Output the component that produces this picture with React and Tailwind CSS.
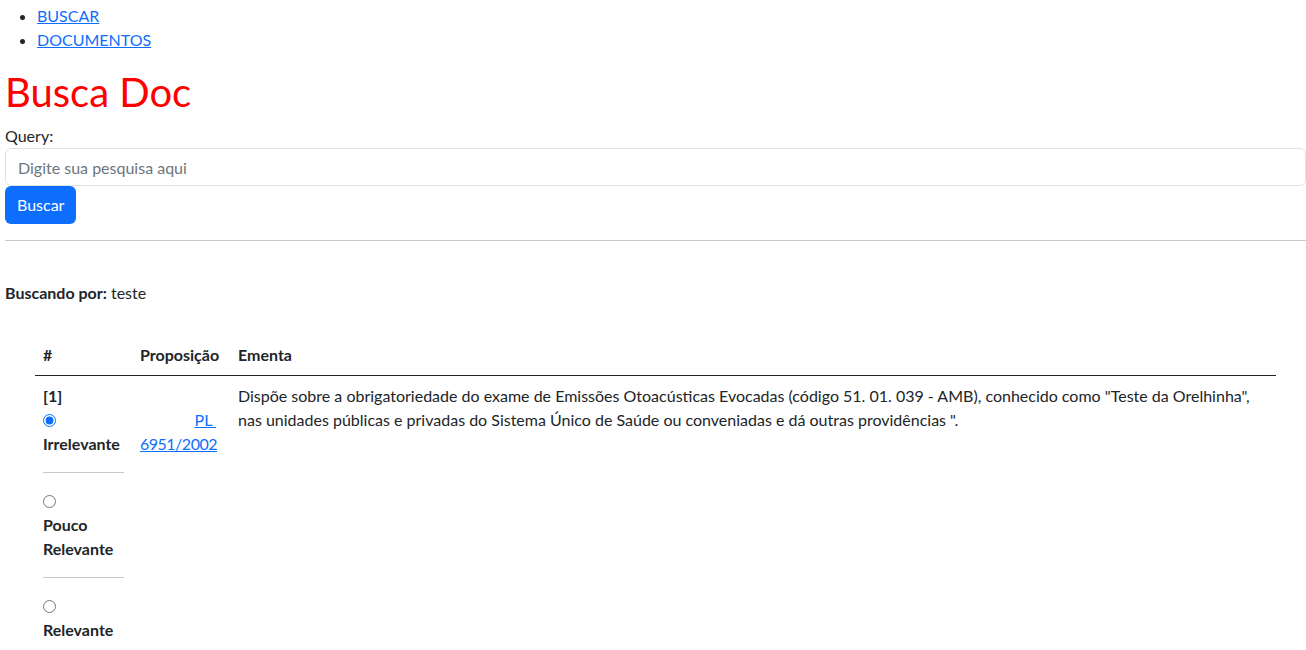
import React from 'react';

const font = { fontFamily: 'Lato, "Noto Sans", sans-serif' };

const Option = ({ label, checked, last }) => (
  <div>
    <div className="h-6 flex items-center">
      <input type="radio" name="rel-1" defaultChecked={checked} className="m-0 w-[13px] h-[13px] accent-[#0d6efd]" />
    </div>
    <div className="font-bold">{label}</div>
    {!last && <hr className="my-4 border-0 border-t border-[#c8c8c8]" />}
  </div>
);

export default function App() {
  return (
    <div className="bg-white text-[#212529] text-base leading-6 pl-[5px] pt-[4px] min-h-[650px]" style={font}>
      <ul className="list-disc pl-8 mb-4">
        <li><a href="#" className="text-[#0d6efd] underline">BUSCAR</a></li>
        <li><a href="#" className="text-[#0d6efd] underline">DOCUMENTOS</a></li>
      </ul>
      <h1 className="text-[40px] leading-[48px] text-[#ff0000] font-normal mb-2">Busca Doc</h1>
      <label className="block">Query:</label>
      <input
        type="text"
        placeholder="Digite sua pesquisa aqui"
        className="block w-full h-[38px] px-3 border border-[#dee2e6] rounded-[6px] placeholder:text-[#6c757d] outline-none"
      />
      <button className="h-[38px] px-3 bg-[#0d6efd] text-white rounded-[6px]">Buscar</button>
      <hr className="my-4 border-0 border-t border-[#c8c8c8]" />
      <div className="pt-6">
        <b className="font-bold">Buscando por:</b> teste
      </div>
      <div className="pt-[30px] px-[30px]">
        <table className="w-full table-fixed border-collapse">
          <thead>
            <tr className="border-b border-[#212529]">
              <th className="text-left font-bold p-2 w-[97px]">#</th>
              <th className="text-left font-bold p-2 w-[98px]">Proposição</th>
              <th className="text-left font-bold p-2">Ementa</th>
            </tr>
          </thead>
          <tbody>
            <tr className="align-top">
              <td className="p-2">
                <div className="font-bold">[1]</div>
                <Option label="Irrelevante" checked />
                <Option label={<>Pouco<br />Relevante</>} />
                <Option label="Relevante" last />
              </td>
              <td className="pt-2 pb-2 pl-2 pr-[14px] text-right">
                <div className="h-6" />
                <a href="#" className="text-[#0d6efd] underline">PL&nbsp;</a>
                <br />
                <a href="#" className="text-[#0d6efd] underline tracking-[-0.5px]">6951/2002</a>
              </td>
              <td className="p-2">
                Dispõe sobre a obrigatoriedade do exame de Emissões Otoacústicas Evocadas (código 51. 01. 039 - AMB), conhecido como "Teste da Orelhinha",<br />
                nas unidades públicas e privadas do Sistema Único de Saúde ou conveniadas e dá outras providências ".
              </td>
            </tr>
          </tbody>
        </table>
      </div>
    </div>
  );
}
